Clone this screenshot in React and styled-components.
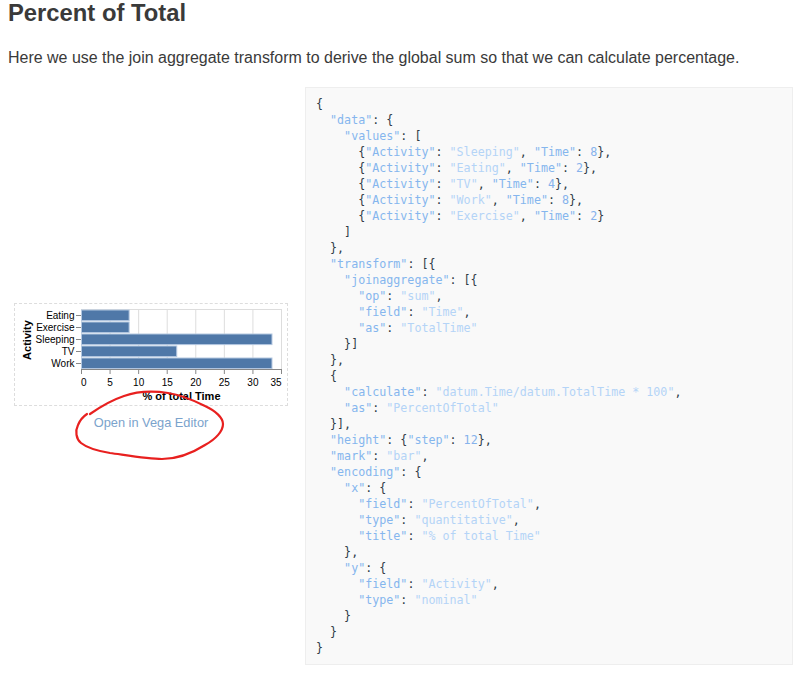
import React from 'react'
import styled, { createGlobalStyle } from 'styled-components'

const GlobalStyle = createGlobalStyle`
  body {
    margin: 0;
    background: #fff;
    font-family: 'Liberation Sans', Arial, sans-serif;
    color: #3a3a3a;
  }
`
const Page = styled.div`
  padding: 0 14px 0 8px;
`
const Heading = styled.h2`
  margin: 0;
  font-size: 23.8px;
  line-height: 26px;
  font-weight: 700;
  color: #3a3a3a;
`
const Intro = styled.p`
  margin: 22px 0 0;
  font-size: 15.97px;
  line-height: 20px;
`
const Example = styled.div`
  display: flex;
  margin-top: 19px;
`
const Side = styled.div`
  flex: 0 0 297px;
  display: flex;
  flex-direction: column;
  justify-content: center;
  padding: 0 0 0 6px;
  box-sizing: border-box;
`
const Figure = styled.div`
  position: relative;
  width: 274px;
  padding-bottom: 18px;
  text-align: center;
`
const ChartBox = styled.svg`
  display: block;
  width: 272px;
  height: 101px;
  border: 1px dashed #ddd;
`
const EditorLink = styled.a`
  display: block;
  margin-top: 9px;
  font-size: 12.8px;
  line-height: 16px;
  color: #7ba3cc;
  text-decoration: none;
`
const Scribble = styled.svg`
  position: absolute;
  left: -14px;
  top: -303px;
  width: 300px;
  height: 500px;
  pointer-events: none;
`
const CodePanel = styled.pre`
  flex: 1;
  margin: 0;
  padding: 8px 10px;
  background: #f9f9f9;
  border: 1px solid #eee;
  font-family: 'DejaVu Sans Mono', 'Liberation Mono', monospace;
  font-size: 11.68px;
  line-height: 16px;
  color: #2f3b46;
`
const Key = styled.span`
  color: #85b6ee;
`
const Str = styled.span`
  color: #b4d4f7;
`
const Num = styled.span`
  color: #86b2ec;
`

const activities = [
  { name: 'Eating', pct: 100 * 2 / 24 },
  { name: 'Exercise', pct: 100 * 2 / 24 },
  { name: 'Sleeping', pct: 100 * 8 / 24 },
  { name: 'TV', pct: 100 * 4 / 24 },
  { name: 'Work', pct: 100 * 8 / 24 },
]
const ticks = [0, 5, 10, 15, 20, 25, 30, 35]
const xPos = (v) => 81.5 + (v / 35) * 200

const Chart = () => (
  <ChartBox viewBox="15 304 272 101">
    {ticks.map((t) => (
      <line key={t} x1={xPos(t)} x2={xPos(t)} y1="309" y2="369" stroke="#ddd" />
    ))}
    <line x1="81" x2="282" y1="309.5" y2="309.5" stroke="#ddd" />
    {activities.map((a, i) => (
      <g key={a.name}>
        <rect x="81.5" y={310 + i * 12} width={(a.pct / 35) * 200} height="10.6" fill="#4f78a8" stroke="#b3c7e0" />
        <line x1="76" x2="81" y1={315.5 + i * 12} y2={315.5 + i * 12} stroke="#888" />
        <text x="74.5" y={319 + i * 12} textAnchor="end" fontSize="10" fontFamily="Liberation Sans" fill="#000">
          {a.name}
        </text>
      </g>
    ))}
    <line x1="81" x2="282" y1="369.5" y2="369.5" stroke="#888" />
    {ticks.map((t, i) => (
      <g key={t}>
        <line x1={xPos(t)} x2={xPos(t)} y1="369" y2="374" stroke="#888" />
        <text
          x={i === 0 ? 81 : i === 7 ? 281.5 : xPos(t)}
          y="385.5"
          textAnchor={i === 0 ? 'start' : i === 7 ? 'end' : 'middle'}
          fontSize="10"
          fontFamily="Liberation Sans"
          fill="#000"
        >
          {t}
        </text>
      </g>
    ))}
    <text x="181.5" y="400" textAnchor="middle" fontSize="11" fontWeight="700" fontFamily="Liberation Sans" fill="#000">
      % of total Time
    </text>
    <text
      transform="translate(30.5 340) rotate(-90)"
      textAnchor="middle"
      fontSize="11"
      fontWeight="700"
      fontFamily="Liberation Sans"
      fill="#000"
    >
      Activity
    </text>
  </ChartBox>
)

const code = `{
  "data": {
    "values": [
      {"Activity": "Sleeping", "Time": 8},
      {"Activity": "Eating", "Time": 2},
      {"Activity": "TV", "Time": 4},
      {"Activity": "Work", "Time": 8},
      {"Activity": "Exercise", "Time": 2}
    ]
  },
  "transform": [{
    "joinaggregate": [{
      "op": "sum",
      "field": "Time",
      "as": "TotalTime"
    }]
  },
  {
    "calculate": "datum.Time/datum.TotalTime * 100",
    "as": "PercentOfTotal"
  }],
  "height": {"step": 12},
  "mark": "bar",
  "encoding": {
    "x": {
      "field": "PercentOfTotal",
      "type": "quantitative",
      "title": "% of total Time"
    },
    "y": {
      "field": "Activity",
      "type": "nominal"
    }
  }
}`

// very small json highlighter, enough for this snippet
const highlight = (src) => {
  const parts = []
  const re = /("[^"]*")(\s*:)?|(\b\d+\b)/g
  let last = 0
  let m
  while ((m = re.exec(src))) {
    parts.push(src.slice(last, m.index))
    if (m[3]) parts.push(<Num key={m.index}>{m[3]}</Num>)
    else if (m[2]) {
      parts.push(<Key key={m.index}>{m[1]}</Key>)
      parts.push(m[2])
    } else parts.push(<Str key={m.index}>{m[1]}</Str>)
    last = re.lastIndex
  }
  parts.push(src.slice(last))
  return parts
}

const App = () => (
  <Page>
    <GlobalStyle />
    <Heading>Percent of Total</Heading>
    <Intro>Here we use the join aggregate transform to derive the global sum so that we can calculate percentage.</Intro>
    <Example>
      <Side>
        <Figure>
          <Chart />
          <EditorLink href="#">Open in Vega Editor</EditorLink>
          <Scribble viewBox="0 0 300 500">
            <path
              d="M90 414 C100 407 112 400 124 396 C138 391 155 391 168 393 C182 395 195 401 205 406 C216 411 223 418 223 424 C223 431 216 439 205 445 C194 452 178 459 162 459 C148 459 125 455 110 453 C98 451 86 447 81 443 C76 439 75 431 78 425 C80 420 84 416 87 414"
              fill="none"
              stroke="#e8201f"
              strokeWidth="2.2"
              strokeLinecap="round"
            />
          </Scribble>
        </Figure>
      </Side>
      <CodePanel>{highlight(code)}</CodePanel>
    </Example>
  </Page>
)

export default App
